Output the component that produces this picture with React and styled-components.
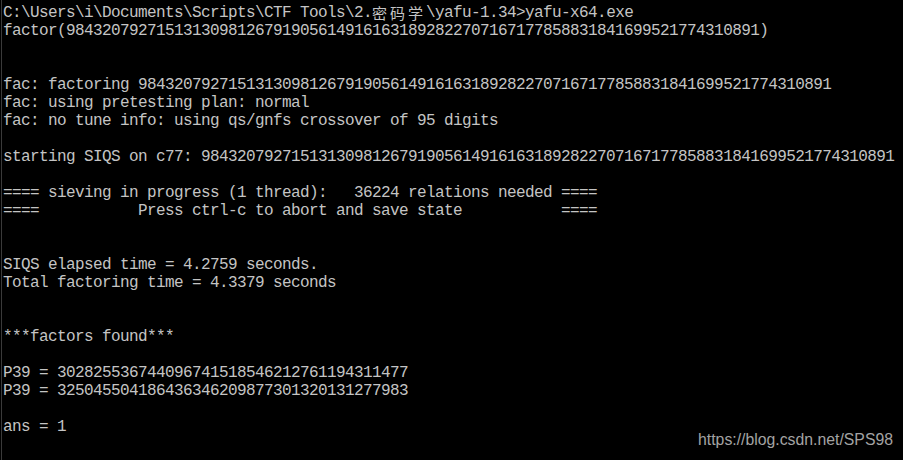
import React from "react";
import styled, { createGlobalStyle } from "styled-components";

const Global = createGlobalStyle`
  html, body { margin: 0; padding: 0; background: #000; }
  body { width: 903px; height: 460px; overflow: hidden; }
`;

const Screen = styled.div`
  position: relative;
  width: 903px;
  height: 460px;
  background: #000;
  box-sizing: border-box;
  padding: 4px 0 0 3px;
  overflow: hidden;
  &::before {
    content: "";
    position: absolute;
    left: 1px;
    top: 0;
    bottom: 0;
    width: 1px;
    background: #3a3a3a;
  }
`;

const Line = styled.div`
  height: 18px;
  line-height: 18px;
  white-space: pre;
  font-family: "Liberation Mono", "DejaVu Sans Mono", monospace;
  font-size: 16px;
  letter-spacing: -0.6px;
  color: #c4c4c4;
`;

const Cjk = styled.span`
  display: inline-block;
  height: 18px;
  line-height: 18px;
  vertical-align: top;
  font-family: "Noto Sans CJK SC", sans-serif;
  font-size: 15px;
  letter-spacing: 3px;
`;

const Watermark = styled.div`
  position: absolute;
  right: 10px;
  bottom: 11px;
  font-family: "Liberation Sans", Arial, sans-serif;
  font-size: 15.8px;
  color: #a3a3a3;
  line-height: 18px;
`;

const N = "98432079271513130981267919056149161631892822707167177858831841699521774310891";

const lines = [
  null,
  `factor(${N})`,
  "",
  "",
  `fac: factoring ${N}`,
  "fac: using pretesting plan: normal",
  "fac: no tune info: using qs/gnfs crossover of 95 digits",
  "",
  `starting SIQS on c77: ${N}`,
  "",
  "==== sieving in progress (1 thread):   36224 relations needed ====",
  "====           Press ctrl-c to abort and save state           ====",
  "",
  "",
  "SIQS elapsed time = 4.2759 seconds.",
  "Total factoring time = 4.3379 seconds",
  "",
  "",
  "***factors found***",
  "",
  "P39 = 302825536744096741518546212761194311477",
  "P39 = 325045504186436346209877301320131277983",
  "",
  "ans = 1",
];

export default function App() {
  return (
    <>
      <Global />
      <Screen>
        {lines.map((l, i) =>
          l === null ? (
            <Line key={i}>
              {"C:\\Users\\i\\Documents\\Scripts\\CTF Tools\\2."}
              <Cjk>密码学</Cjk>
              {"\\yafu-1.34>yafu-x64.exe"}
            </Line>
          ) : (
            <Line key={i}>{l}</Line>
          )
        )}
        <Watermark>https://blog.csdn.net/SPS98</Watermark>
      </Screen>
    </>
  );
}
